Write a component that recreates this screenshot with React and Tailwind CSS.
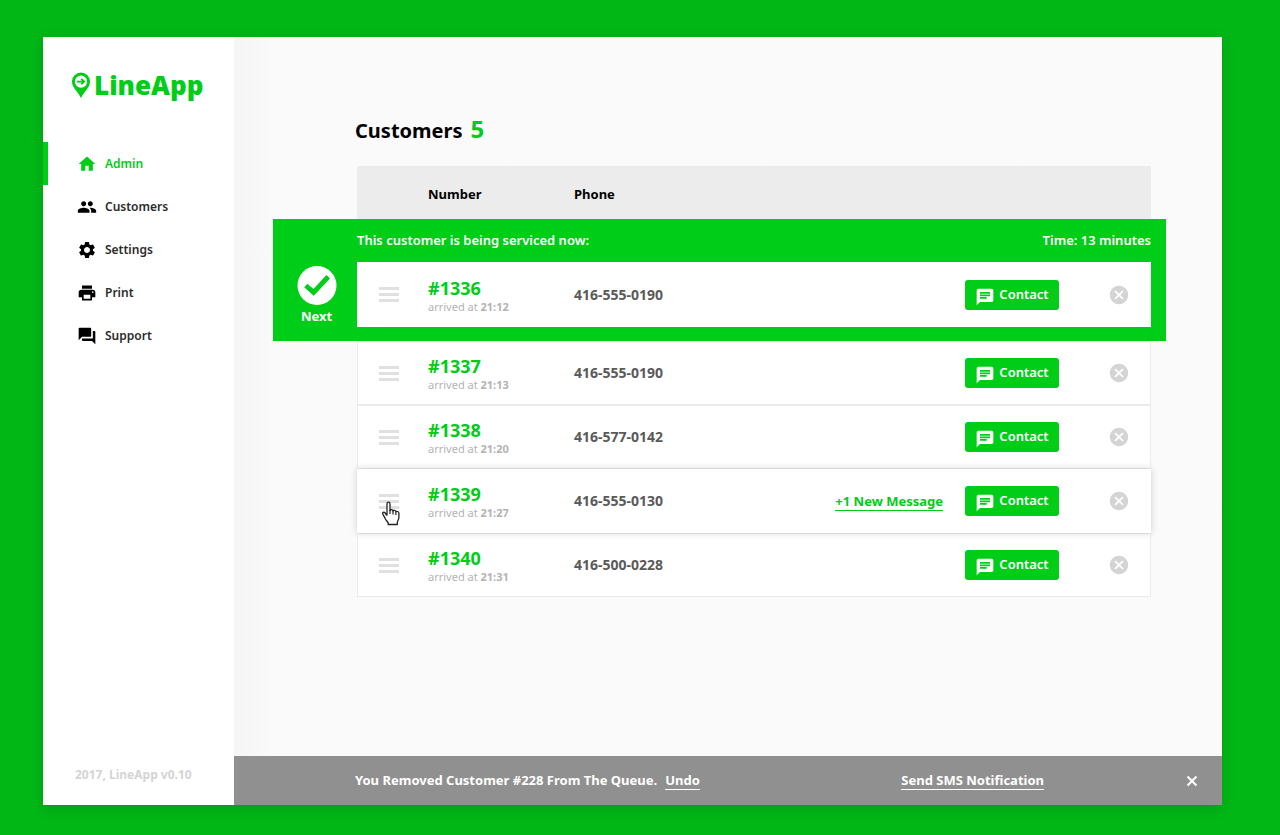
import { MdCancel, MdChat, MdHome, MdPeople, MdPrint, MdQuestionAnswer, MdSettings } from "react-icons/md";

const NAV = [
  { label: "Admin", Icon: MdHome, active: true },
  { label: "Customers", Icon: MdPeople },
  { label: "Settings", Icon: MdSettings },
  { label: "Print", Icon: MdPrint },
  { label: "Support", Icon: MdQuestionAnswer },
];

const CURRENT = { number: "#1336", time: "21:12", phone: "416-555-0190" };

const QUEUE = [
  { number: "#1337", time: "21:13", phone: "416-555-0190" },
  { number: "#1338", time: "21:20", phone: "416-577-0142" },
  { number: "#1339", time: "21:27", phone: "416-555-0130", message: "+1 New Message", dragged: true },
  { number: "#1340", time: "21:31", phone: "416-500-0228" },
];

function Logo() {
  return (
    <a href="#" className="flex items-center gap-1 pl-[29px] text-[#00cd17]">
      <svg viewBox="0 0 18 26" className="h-[26px] w-[18px]" aria-hidden="true">
        <path
          fill="currentColor"
          fillRule="evenodd"
          d="M9 .5A9 8.800 0 0 0 0 9.500C0 15.500 5.500 19 9 26 12.500 19 18 15.500 18 9.500A9 8.800 0 0 0 9 .5ZM9 3.500a6.100 6.100 0 1 1 0 12.200 6.100 6.100 0 0 1 0-12.200Z"
        />
        <path d="M4.800 9.600h7M9.300 6.800l2.800 2.800-2.800 2.800" fill="none" stroke="currentColor" strokeWidth="1.900" />
      </svg>
      <span className="font-['Noto_Sans','Open_Sans',sans-serif] text-[26px] leading-8 font-black">LineApp</span>
    </a>
  );
}

function HandCursor() {
  return (
    <svg viewBox="0 0 19 25" className="pointer-events-none absolute top-8 left-6 h-[25px] w-[19px]" aria-hidden="true">
      <path
        d="M6 14.500V3C6 .6 9 .6 9 3v6.500c.4-1.300 2.800-1.100 3 .5.600-1.200 2.700-.8 2.900.7.800-.8 3-.3 3 1.600v4.200c0 2.300-1.600 3.200-1.600 5.200v1.800H7.200v-1.700c-1-1.700-2.600-2.700-3.200-4.700l-2.200-4C.900 11.500 3 10.600 4.200 12L6 14.500"
        fill="white"
        stroke="#222"
        strokeWidth="1.300"
        strokeLinejoin="round"
      />
      <path d="M9 9v4M12 10v3.500M14.900 11v3" stroke="#222" strokeWidth="1.200" fill="none" />
    </svg>
  );
}

function CustomerCells({ customer, cell = "" }) {
  return (
    <>
      <td className={`relative flex w-[71px] shrink-0 items-center pl-[22px] ${cell}`}>
        <button type="button" aria-label={`Move ${customer.number}`} className="flex w-5 cursor-pointer flex-col gap-[3px]">
          <span className="h-[3px] bg-[#e0e0e0]" />
          <span className="h-[3px] bg-[#e0e0e0]" />
          <span className="h-[3px] bg-[#e0e0e0]" />
        </button>
        {customer.dragged && <HandCursor />}
      </td>
      <td className={`flex w-[146px] shrink-0 flex-col justify-center pt-0.5 ${cell}`}>
        <span className="text-lg leading-[22px] font-bold text-[#00cd17]">{customer.number}</span>
        <span className="text-[11px] leading-4 text-[#b3b3b3]">
          arrived at <b>{customer.time}</b>
        </span>
      </td>
      <td className={`flex flex-1 items-center text-sm font-bold text-[#5a5a5a] ${cell}`}>{customer.phone}</td>
      <td className={`flex items-center gap-[22px] ${cell}`}>
        {customer.message && (
          <a href="#" className="border-b border-[#00cd17] text-[13px] leading-[18px] font-bold text-[#00cd17]">
            {customer.message}
          </a>
        )}
        <button type="button" className="flex h-[30px] w-[94px] items-center justify-center gap-1 rounded-[3px] bg-[#00cd17] text-[13px] font-semibold text-white">
          <MdChat className="mt-1 size-5" />
          Contact
        </button>
      </td>
      <td className={`flex w-[92px] shrink-0 items-center justify-end pr-[21px] ${cell}`}>
        <button type="button" aria-label={`Remove ${customer.number}`} className="text-[#d4d4d4]">
          <MdCancel className="size-[22px]" />
        </button>
      </td>
    </>
  );
}

function Queue() {
  return (
    <table className="block text-left">
      <thead className="block bg-[#ececec]">
        <tr className="flex h-[53px] items-center pt-1 text-[13px] text-black">
          <td className="w-[71px]" />
          <th scope="col" className="w-[146px] font-bold">Number</th>
          <th scope="col" className="flex-1 font-bold">Phone</th>
        </tr>
      </thead>
      <tbody className="-mr-[15px] -ml-[84px] block bg-[#00cd17] pr-[15px] pb-[14px]">
        <tr className="flex h-[43px]">
          <th scope="rowgroup" className="flex flex-1 items-center justify-between pl-[84px] text-[13px] font-semibold text-white">
            <span>This customer is being serviced now:</span>
            <span>Time: 13 minutes</span>
          </th>
        </tr>
        <tr className="flex h-[65px]">
          <td className="flex w-[84px] shrink-0 justify-center pt-1 pl-[3px]">
            <button type="button" className="flex flex-col items-center text-[13px] leading-[22px] font-bold text-white">
              <svg viewBox="0 0 40 40" className="size-10" aria-hidden="true">
                <circle cx="20" cy="20" r="20" fill="white" />
                <path d="M8.500 20 16.500 27 31.500 11" fill="none" stroke="#00cd17" strokeWidth="5" />
              </svg>
              Next
            </button>
          </td>
          <CustomerCells customer={CURRENT} cell="bg-white" />
        </tr>
      </tbody>
      <tbody className="block bg-white">
        {QUEUE.map((customer) => (
          <tr
            key={customer.number}
            className={
              customer.dragged
                ? "relative flex h-16 shadow-[0_0_7px_rgba(0,0,0,0.18)]"
                : "flex h-16 shadow-[inset_0_0_0_1px_#ebebeb]"
            }
          >
            <CustomerCells customer={customer} />
          </tr>
        ))}
      </tbody>
    </table>
  );
}

export default function App() {
  return (
    <div className="flex min-h-screen bg-[#00b716] pt-[37px] pr-[58px] pb-[30px] pl-[43px] font-['Noto_Sans','Open_Sans',sans-serif]">
      <div className="flex flex-1 shadow-[0_3px_12px_rgba(0,0,0,0.15)]">
        <aside className="flex w-[191px] shrink-0 flex-col bg-white pt-8 pb-[18px]">
          <Logo />
          <nav className="mt-[41px] flex flex-col">
            {NAV.map(({ label, Icon, active }) => (
              <a
                key={label}
                href="#"
                className={`flex h-[43px] items-center gap-2 border-l-5 pl-[29px] text-xs font-semibold ${
                  active ? "border-[#00cd17] text-[#00cd17]" : "border-transparent text-[#2b2b2b]"
                }`}
              >
                <Icon className={active ? "size-5" : "size-5 text-black"} />
                {label}
              </a>
            ))}
          </nav>
          <p className="mt-auto pl-8 text-xs leading-6 font-bold text-[#d4d4d4]">2017, LineApp v0.10</p>
        </aside>
        <div className="flex min-w-0 flex-1 flex-col bg-[#fafafa]">
          <main className="flex-1 bg-linear-to-r from-[#f5f5f5] to-[#fafafa] to-[40px] pt-[76px] pr-[71px] pb-10 pl-[123px]">
            <h1 className="-ml-0.5 flex h-[53px] items-baseline gap-2 text-xl leading-8 font-bold text-black">
              Customers <span className="text-2xl leading-8 text-[#00cd17]">5</span>
            </h1>
            <Queue />
          </main>
          <footer className="flex h-[49px] items-center bg-[#909090] pr-[22px] pl-[121px] text-[13px] leading-[17px] font-bold text-white">
            <p className="flex-1">
              You Removed Customer #228 From The Queue.
              <a href="#" className="ml-2 inline-block border-b border-white">Undo</a>
            </p>
            <a href="#" className="border-b border-white">Send SMS Notification</a>
            <button type="button" aria-label="Dismiss" className="ml-[140px]">
              <svg viewBox="0 0 16 16" className="size-4" aria-hidden="true">
                <path d="M3.500 3.500 12.500 12.500M12.500 3.500 3.500 12.500" fill="none" stroke="currentColor" strokeWidth="2" />
              </svg>
            </button>
          </footer>
        </div>
      </div>
    </div>
  );
}
